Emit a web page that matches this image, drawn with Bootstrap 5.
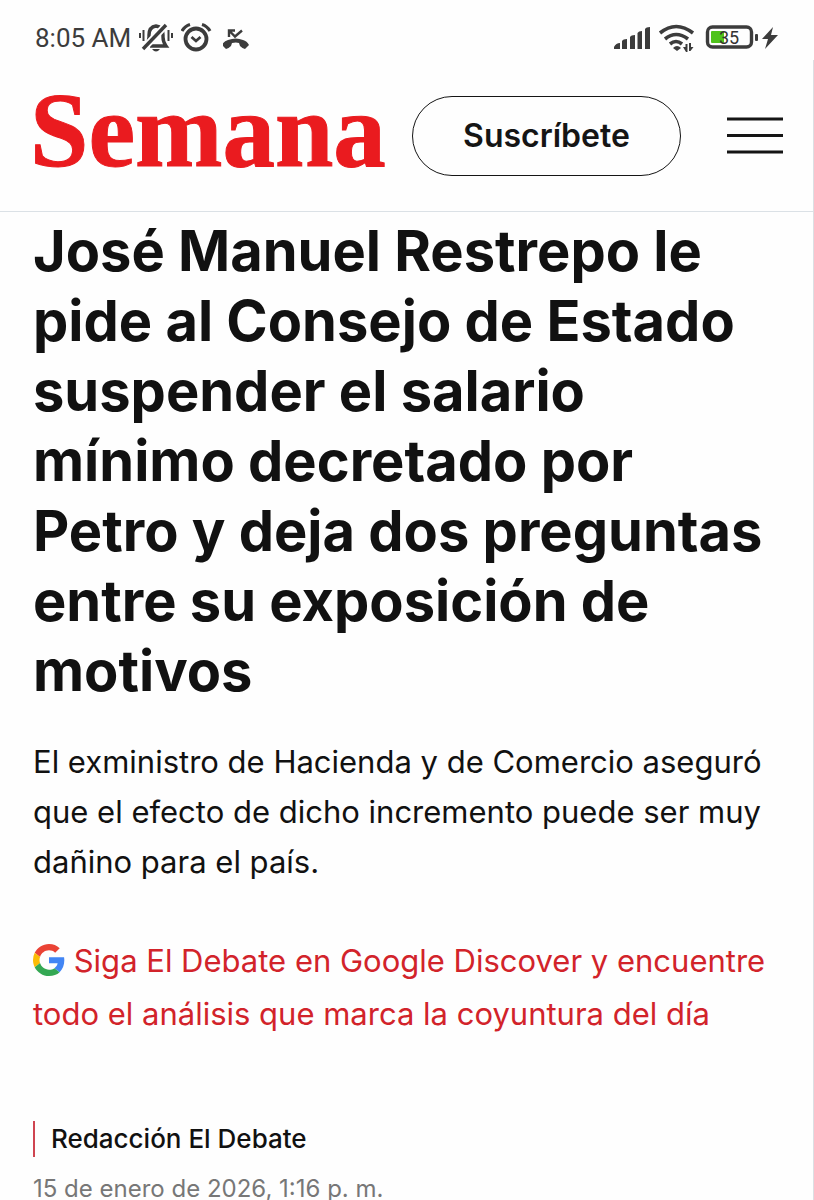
<!DOCTYPE html>
<html lang="es">
<head>
<meta charset="utf-8">
<meta name="viewport" content="width=device-width, initial-scale=1">
<title>Semana</title>
<link href="https://cdn.jsdelivr.net/npm/bootstrap@5.3.0/dist/css/bootstrap.min.css" rel="stylesheet">
<style>
body { font-family: Inter, "Liberation Sans", sans-serif; color: #111; background: #fefefe; }
a { text-decoration: none; }
.phone-status { height: 60px; padding: 16px 35px 0 35px; font: 26px/44px Roboto, sans-serif; color: #3c3c3c; }
.phone-status svg { display: block; }
.page { border-right: 1px solid #dcdfe3; }
.site-header { height: 152px; padding: 0 30px 0 32px; border-bottom: 1px solid #dbe1e6; }
.brand-name { font: bold 105px/104px "Liberation Serif", serif; color: #ea1b1f; -webkit-text-stroke: 1px #ea1b1f; padding-bottom: 10px; margin-left: -2px; }
.brand-name:hover { color: #ea1b1f; }
.btn-subscribe { width: 269px; height: 80px; border: 1px solid #151515; font-size: 32px; line-height: 40px; font-weight: 600; color: #151515; margin-right: 46px; }
.menu-button { line-height: 0; color: #151515; }
.story { padding: 4px 33px 0; }
.headline { font-size: 56px; line-height: 70px; font-weight: 700; margin-bottom: 31px; }
.summary { font-size: 31px; line-height: 50px; margin-bottom: 47px; }
.discover { font-size: 31px; line-height: 53px; margin-bottom: 81px; }
.discover a { color: #d2232a; }
.discover svg { margin-top: -8px; }
.byline { border-left: 2px solid #cf4450; padding-left: 16px; font-size: 26px; line-height: 36px; font-weight: 500; }
.byline a { color: #111; }
.dateline { font-size: 24px; line-height: 32px; color: #777; margin: 16px 0 0; }
</style>
</head>
<body class="overflow-x-hidden">
<div class="phone-status d-flex justify-content-between">
  <div class="d-flex align-items-center">
    <span>8:05 AM</span>
    <svg class="ms-2" width="34" height="32" viewBox="4 1 34 32" fill="none" stroke="#3c3c3c">
      <path d="M5 12v5M8.500 9v11M33.500 9v11M37 12v5" stroke-width="2"/>
      <path d="M11 24q3-3 3-8v-2q0-8 7-9 7 1 7 9v2q0 5 3 9H15" stroke-width="3.400"/>
      <path d="M8 28L31 4" stroke="#fefefe" stroke-width="7"/><path d="M8 28L31 4" stroke-width="3.400"/>
      <path d="M17 28h8q-4 5-8 0z" fill="#3c3c3c" stroke="none"/>
    </svg>
    <svg class="ms-2" width="34" height="32" viewBox="1 1 34 32" fill="none" stroke="#3c3c3c">
      <circle cx="16" cy="18" r="10.500" stroke-width="3.800"/><path d="M11.500 16l4.500 4 4.500-4" stroke-width="2.800"/>
      <path d="M2 10q3-5 8-6.500M30 10q-3-5-8-6.500" stroke-width="3.200"/>
    </svg>
    <svg class="ms-2" width="28" height="32" viewBox="2 0 28 32">
      <path d="M1 23q2-4 6-5 8-3 15 0 4 1 6 5l-4 4q-2 0-5-3l-1-3q-3-1-7 0l-1 3q-3 3-5 3z" fill="#3c3c3c"/>
      <path d="M8 15V8.500h6M8 8.500l6 6 7-6" fill="none" stroke="#3c3c3c" stroke-width="2.400"/>
    </svg>
  </div>
  <svg class="mt-1" width="166" height="34" viewBox="0 0 166 34">
    <g fill="#3c3c3c">
      <path d="M1 29v-2q2-4 6-4v6zM9 29v-8q1-2 5-2v10zM17 29V17q1-2 5-2v14zM24.500 29V13q1-2 4.500-2v18zM32 29V9q1-2 5-2v22z"/>
      <path d="M60 28q4-4 8 0l-4 3z"/>
      <path d="M70 27h2.500v-3l2 0v8h-1.500zM76 23v8h1.500l3-4h-2.500v-4z"/>
      <rect x="142" y="14" width="3" height="7" rx="1"/>
      <path d="M160 7l-11 12h6l-3 10 13-14h-7z"/>
    </g>
    <path d="M47 13q16-13 33 0M52 19q11-9 23 0M57 24q6-5 12 0" fill="none" stroke="#3c3c3c" stroke-width="3.600"/>
    <rect x="94.500" y="7" width="44" height="20" rx="5" fill="none" stroke="#3c3c3c" stroke-width="3.400"/>
    <rect x="98" y="11" width="13" height="12" rx="1" fill="#4fc31b"/>
    <text x="106" y="24" font-size="18" font-family="Roboto" fill="#333">35</text>
  </svg>
</div>
<div class="page">
  <header class="site-header d-flex align-items-center">
    <a class="brand-name" href="#">Semana</a>
    <button type="button" class="btn btn-subscribe rounded-pill ms-auto">Suscríbete</button>
    <button type="button" class="menu-button btn p-0 border-0" aria-label="Menú">
      <svg width="56" height="37" viewBox="0 0 56 37" stroke="currentColor" stroke-width="3"><path d="M0 2h56M0 18.500h56M0 35h56"/></svg>
    </button>
  </header>
  <main class="story">
    <h1 class="headline">José Manuel Restrepo le pide al Consejo de Estado suspender el salario mínimo decretado por Petro y deja dos preguntas entre su exposición de motivos</h1>
    <p class="summary">El exministro de Hacienda y de Comercio aseguró que el efecto de dicho incremento puede ser muy dañino para el país.</p>
    <p class="discover"><a href="#"><svg width="32" height="32" viewBox="0 0 48 48"><path fill="#ea4335" d="M24 9.500c3.540 0 6.710 1.220 9.210 3.600l6.850-6.850C35.900 2.380 30.470 0 24 0 14.620 0 6.510 5.380 2.560 13.220l7.980 6.190C12.430 13.720 17.740 9.500 24 9.500z"/><path fill="#4285f4" d="M46.980 24.550c0-1.570-.15-3.090-.38-4.550H24v9.020h12.940c-.58 2.960-2.260 5.480-4.780 7.180l7.730 6c4.510-4.180 7.090-10.360 7.090-17.650z"/><path fill="#fbbc05" d="M10.530 28.590A14.500 14.500 0 0 1 9.770 24c0-1.600.27-3.140.76-4.590l-7.980-6.190A24 24 0 0 0 0 24c0 3.880.92 7.540 2.560 10.780z"/><path fill="#34a853" d="M24 48c6.480 0 11.930-2.130 15.890-5.810l-7.730-6C30 37.640 27.240 38.490 24 38.490c-6.260 0-11.570-4.220-13.470-9.910l-7.970 6.200C6.510 42.620 14.620 48 24 48z"/></svg> Siga El Debate en Google Discover y encuentre todo el análisis que marca la coyuntura del día</a></p>
    <div class="byline"><a href="#">Redacción El Debate</a></div>
    <p class="dateline">15 de enero de 2026, 1:16 p. m.</p>
  </main>
</div>
<script src="https://cdn.jsdelivr.net/npm/bootstrap@5.3.0/dist/js/bootstrap.bundle.min.js"></script>
</body>
</html>
